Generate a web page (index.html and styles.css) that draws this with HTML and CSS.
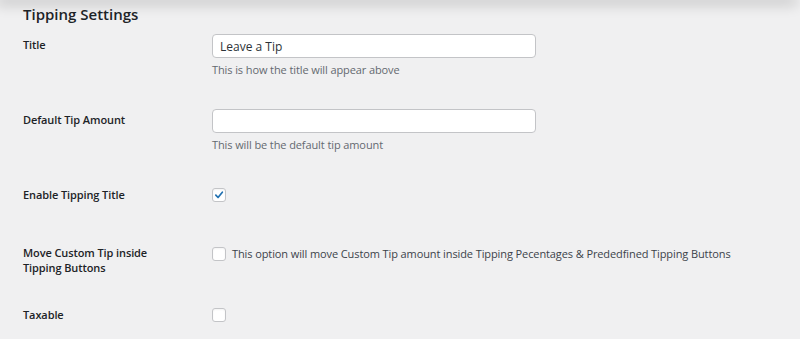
FILE: index.html
```html
<!DOCTYPE html>
<html lang="en">
<head>
  <meta charset="UTF-8" />
  <meta name="viewport" content="width=device-width, initial-scale=1.0"/>
  <title>Tipping Settings</title>
  <link rel="stylesheet" href="styles.css">
</head>
<body>
  <div class="topbar"></div>
  <div class="wrap">
    <h2>Tipping Settings</h2>
    <div class="form-table">
      <div class="row row-text">
        <label class="th" for="tipTitle">Title</label>
        <div class="td">
          <input type="text" id="tipTitle" class="regular-text" value="Leave a Tip">
          <p class="description">This is how the title will appear above</p>
        </div>
      </div>
      <div class="row row-text">
        <label class="th" for="tipAmount">Default Tip Amount</label>
        <div class="td">
          <input type="text" id="tipAmount" class="regular-text" value="">
          <p class="description">This will be the default tip amount</p>
        </div>
      </div>
      <div class="row row-check">
        <label class="th" for="tipEnable">Enable Tipping Title</label>
        <div class="td">
          <label class="check">
            <span class="box checked">
              <svg viewBox="0 0 14 14" width="14" height="14"><path d="M3.3 7.2 L5.9 9.9 L10.9 3.7" fill="none" stroke="#2271b1" stroke-width="2" stroke-linecap="round" stroke-linejoin="round"/></svg>
            </span>
          </label>
        </div>
      </div>
      <div class="row row-check row-tall">
        <label class="th" for="tipMove">Move Custom Tip inside Tipping Buttons</label>
        <div class="td">
          <label class="check">
            <span class="box"></span>
            This option will move Custom Tip amount inside Tipping Pecentages &amp; Prededfined Tipping Buttons
          </label>
        </div>
      </div>
      <div class="row row-check">
        <label class="th" for="tipTax">Taxable</label>
        <div class="td">
          <label class="check">
            <span class="box"></span>
          </label>
        </div>
      </div>
    </div>
  </div>
</body>
</html>
```

FILE: styles.css
```css
body {
  margin: 0;
  background: #f0f0f1;
  color: #1d2327;
  font-family: 'Open Sans', 'Noto Sans', sans-serif;
  font-size: 11px;
  letter-spacing: -0.1px;
  height: 339px;
  overflow: hidden;
}
.topbar {
  height: 0;
  width: 793px;
  box-shadow: 0 0 14px 4px rgba(0, 0, 0, 0.22);
}
.wrap {
  padding-left: 23px;
}
h2 {
  margin: 0;
  padding-top: 4px;
  font-size: 15px;
  font-weight: 600;
  letter-spacing: 0;
  line-height: 20px;
  height: 17px;
}
.row {
  display: grid;
  grid-template-columns: 189px 1fr;
}
.row-text { height: 75px; }
.row-check { height: 58px; }
.row-tall { height: 62px; }
.th {
  padding-top: 16px;
  font-weight: 600;
  line-height: 15px;
  padding-right: 40px;
}
.td {
  padding-top: 13px;
}
.regular-text {
  box-sizing: border-box;
  display: block;
  width: 324px;
  height: 24px;
  margin: 0;
  padding: 0 7px;
  border: 1px solid #c3c4c7;
  border-radius: 4px;
  background: #fff;
  font-family: inherit;
  font-size: 12px;
  letter-spacing: 0;
  color: #2c3338;
  outline: none;
}
.description {
  margin: 3px 0 0;
  line-height: 18px;
  color: #646970;
}
.check {
  display: flex;
  align-items: center;
  gap: 6px;
  padding-top: 4px;
  line-height: 16px;
  color: #3c434a;
}
.box {
  box-sizing: border-box;
  width: 14px;
  height: 14px;
  flex: none;
  border: 1px solid #c3c4c7;
  border-radius: 3px;
  background: #fff;
  box-shadow: inset 0 1px 2px rgba(0, 0, 0, 0.05);
  display: flex;
  align-items: center;
  justify-content: center;
}
.box svg { display: block; }
```
